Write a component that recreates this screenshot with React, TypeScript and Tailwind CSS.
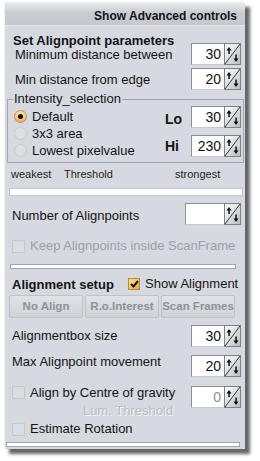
import React from "react";

const font = { fontFamily: '"Liberation Sans", Arial, sans-serif' };

const SpinArrows = () => (
  <svg width="17" height="22" viewBox="0 0 17 22" className="block">
    <defs>
      <linearGradient id="spg" x1="0" y1="0" x2="1" y2="1">
        <stop offset="0" stopColor="#ffffff" />
        <stop offset="1" stopColor="#b9bcc0" />
      </linearGradient>
    </defs>
    <rect x="0.5" y="0.5" width="16" height="21" fill="url(#spg)" stroke="#7d8186" />
    <line x1="1" y1="21" x2="16" y2="1" stroke="#3a3a3a" strokeWidth="1" />
    <path d="M5 4 L2.5 7.5 H7.5 Z" fill="#111" />
    <rect x="4.3" y="6" width="1.5" height="5" fill="#111" />
    <path d="M12 19 L9.5 15.5 H14.5 Z" fill="#111" />
    <rect x="11.3" y="11.5" width="1.5" height="5" fill="#111" />
  </svg>
);

const Spinner = ({
  value,
  inputW = "w-[33px]",
  disabled = false,
}: {
  value: string;
  inputW?: string;
  disabled?: boolean;
}) => (
  <div className="flex h-[22px] shrink-0">
    <div
      className={`${inputW} h-[22px] bg-white border border-[#c6c9cd] border-t-[#8d9196] border-l-[#8d9196] border-r-0 flex items-center justify-end pr-[3px] text-[14px] leading-none ${
        disabled ? "text-[#8c9095]" : "text-[#111]"
      }`}
    >
      {value}
    </div>
    <SpinArrows />
  </div>
);

const CheckBox = ({ checked = false }: { checked?: boolean }) =>
  checked ? (
    <div className="w-[12px] h-[12px] shrink-0 border border-[#c08a2e] bg-gradient-to-br from-[#fbe39a] to-[#eaa53c] flex items-center justify-center">
      <svg width="9" height="8" viewBox="0 0 9 8">
        <path d="M1 4 L3.5 6.5 L8 1" fill="none" stroke="#1a1a1a" strokeWidth="2" />
      </svg>
    </div>
  ) : (
    <div className="w-[13px] h-[13px] shrink-0 border border-[#c4c8cd] bg-[#dadde2]" />
  );

const Radio = ({ on = false }: { on?: boolean }) =>
  on ? (
    <div className="w-[13px] h-[13px] rounded-full shrink-0 border border-[#d08a35] bg-gradient-to-b from-[#fde2b0] to-[#f2b25e] flex items-center justify-center">
      <div className="w-[5px] h-[5px] rounded-full bg-[#111]" />
    </div>
  ) : (
    <div className="w-[13px] h-[13px] rounded-full shrink-0 border border-[#c6cacf] bg-[#dcdfe3]" />
  );

export default function App() {
  return (
    <div className="w-[260px] h-[461px] bg-white pl-[4px] pt-[2px] text-[#141414] whitespace-nowrap" style={font}>
      <div className="w-[241px] bg-[#d6dae0] border-l border-[#f2f3f5] shadow-[5px_5px_3px_rgba(0,0,0,0.6)] flex flex-col pb-[2px] [&>*]:shrink-0">
        {/* header */}
        <div className="h-[24px] bg-gradient-to-b from-[#eceef0] via-[#c9cdd2] via-45% to-[#c5c9cf] border-b border-[#e2e5e9] flex items-end justify-end pr-[8px] pb-[2px]">
          <span className="text-[12px] font-bold leading-[14px]">Show Advanced controls</span>
        </div>

        <div className="h-[17px] pt-[2px] pl-[8px]">
          <span className="text-[13px] font-bold leading-[15px]">Set Alignpoint parameters</span>
        </div>

        <div className="h-[22px] flex items-center justify-between pl-[10px] pr-[4px]">
          <span className="text-[13px] leading-[16px] mt-[2px]">Minimum distance between</span>
          <Spinner value="30" />
        </div>
        <div className="mt-[3px] h-[22px] flex items-center justify-between pl-[10px] pr-[4px]">
          <span className="text-[13px] leading-[16px] mt-[1px]">Min distance from edge</span>
          <Spinner value="20" />
        </div>

        <fieldset className="mt-[1px] ml-[2px] w-[237px] border border-[#a2a7ad] pb-[3px]">
          <legend className="ml-[5px] px-[1px] text-[13px] leading-[16px]">Intensity_selection</legend>
          <div className="flex justify-between">
            <div className="mt-[1px] pl-[6px] flex flex-col">
              <div className="h-[17px] flex items-center gap-[5px]">
                <Radio on />
                <span className="text-[13px] leading-[16px]">Default</span>
              </div>
              <div className="h-[17px] flex items-center gap-[5px]">
                <Radio />
                <span className="text-[13px] leading-[16px]">3x3 area</span>
              </div>
              <div className="h-[17px] flex items-center gap-[5px]">
                <Radio />
                <span className="text-[13px] leading-[16px]">Lowest pixelvalue</span>
              </div>
            </div>
            <div className="-mt-[1px] pr-[2px] flex flex-col gap-[7px]">
              <div className="h-[22px] flex items-center">
                <span className="w-[26px] text-[14px] font-bold leading-[16px] mt-[3px]">Lo</span>
                <Spinner value="30" />
              </div>
              <div className="h-[22px] flex items-center">
                <span className="w-[26px] text-[14px] font-bold leading-[16px]">Hi</span>
                <Spinner value="230" />
              </div>
            </div>
          </div>
        </fieldset>

        <div className="h-[22px] flex items-center pl-[6px] text-[11px] leading-[13px] text-[#1e1e1e]">
          <span className="w-[53px]">weakest</span>
          <span className="w-[111px]">Threshold</span>
          <span>strongest</span>
        </div>
        <div className="mt-[3px] ml-[4px] w-[234px] h-[8px] bg-white border border-[#c3c7cc]" />

        <div className="mt-[7px] h-[22px] flex items-center justify-between pl-[7px] pr-[4px]">
          <span className="text-[13px] leading-[16px] mt-[4px]">Number of Alignpoints</span>
          <Spinner value="" inputW="w-[39px]" />
        </div>

        <div className="mt-[11px] h-[20px] flex items-center gap-[5px] pl-[7px]">
          <CheckBox />
          <span className="text-[13px] leading-[16px] text-[#9da1a7]">Keep Alignpoints inside ScanFrame</span>
        </div>

        <div className="mt-[8px] ml-[5px] w-[226px] h-[5px] bg-white border border-[#a0a5ab]" />

        <div className="mt-[6px] h-[18px] flex items-center pl-[7px]">
          <span className="w-[116px] text-[13px] font-bold leading-[16px] mt-[2px]">Alignment setup</span>
          <CheckBox checked />
          <span className="ml-[5px] text-[13px] leading-[16px]">Show Alignment</span>
        </div>

        <div className="mt-[2px] ml-[4px] flex gap-[2px]">
          {["No Align", "R.o.Interest", "Scan Frames"].map((b) => (
            <div
              key={b}
              className="w-[74px] h-[23px] rounded-[2px] border border-[#bfc3c8] bg-gradient-to-b from-[#dfe2e6] to-[#d0d4d9] flex items-center justify-center text-[11.5px] font-bold text-[#8e9298]"
            >
              {b}
            </div>
          ))}
        </div>

        <div className="mt-[7px] h-[22px] flex items-center justify-between pl-[7px] pr-[4px]">
          <span className="text-[13px] leading-[16px]">Alignmentbox size</span>
          <Spinner value="30" />
        </div>

        <div className="mt-[8px] h-[22px] flex items-start justify-between pl-[7px] pr-[4px]">
          <span className="text-[13px] leading-[16px] -mt-[1px]">Max Alignpoint movement</span>
          <Spinner value="20" />
        </div>

        <div className="mt-[9px] flex items-start justify-between pl-[7px] pr-[4px]">
          <div className="w-[161px] flex flex-col">
            <div className="flex items-start gap-[5px]">
              <CheckBox />
              <span className="text-[13px] leading-[16px] -mt-[1px]">Align by Centre of gravity</span>
            </div>
            <span
              className="mt-[2px] self-end text-[13px] leading-[16px] text-[#b9bdc2]"
              style={{ textShadow: "1px 1px 0 #f4f5f7" }}
            >
              Lum. Threshold
            </span>
          </div>
          <Spinner value="0" disabled />
        </div>

        <div className="mt-[1px] h-[18px] flex items-center gap-[5px] pl-[7px]">
          <CheckBox />
          <span className="text-[13px] leading-[16px]">Estimate Rotation</span>
        </div>

        <div className="mt-[4px] ml-[1px] w-[234px] h-[5px] bg-white border border-[#a0a5ab]" />
      </div>
    </div>
  );
}
